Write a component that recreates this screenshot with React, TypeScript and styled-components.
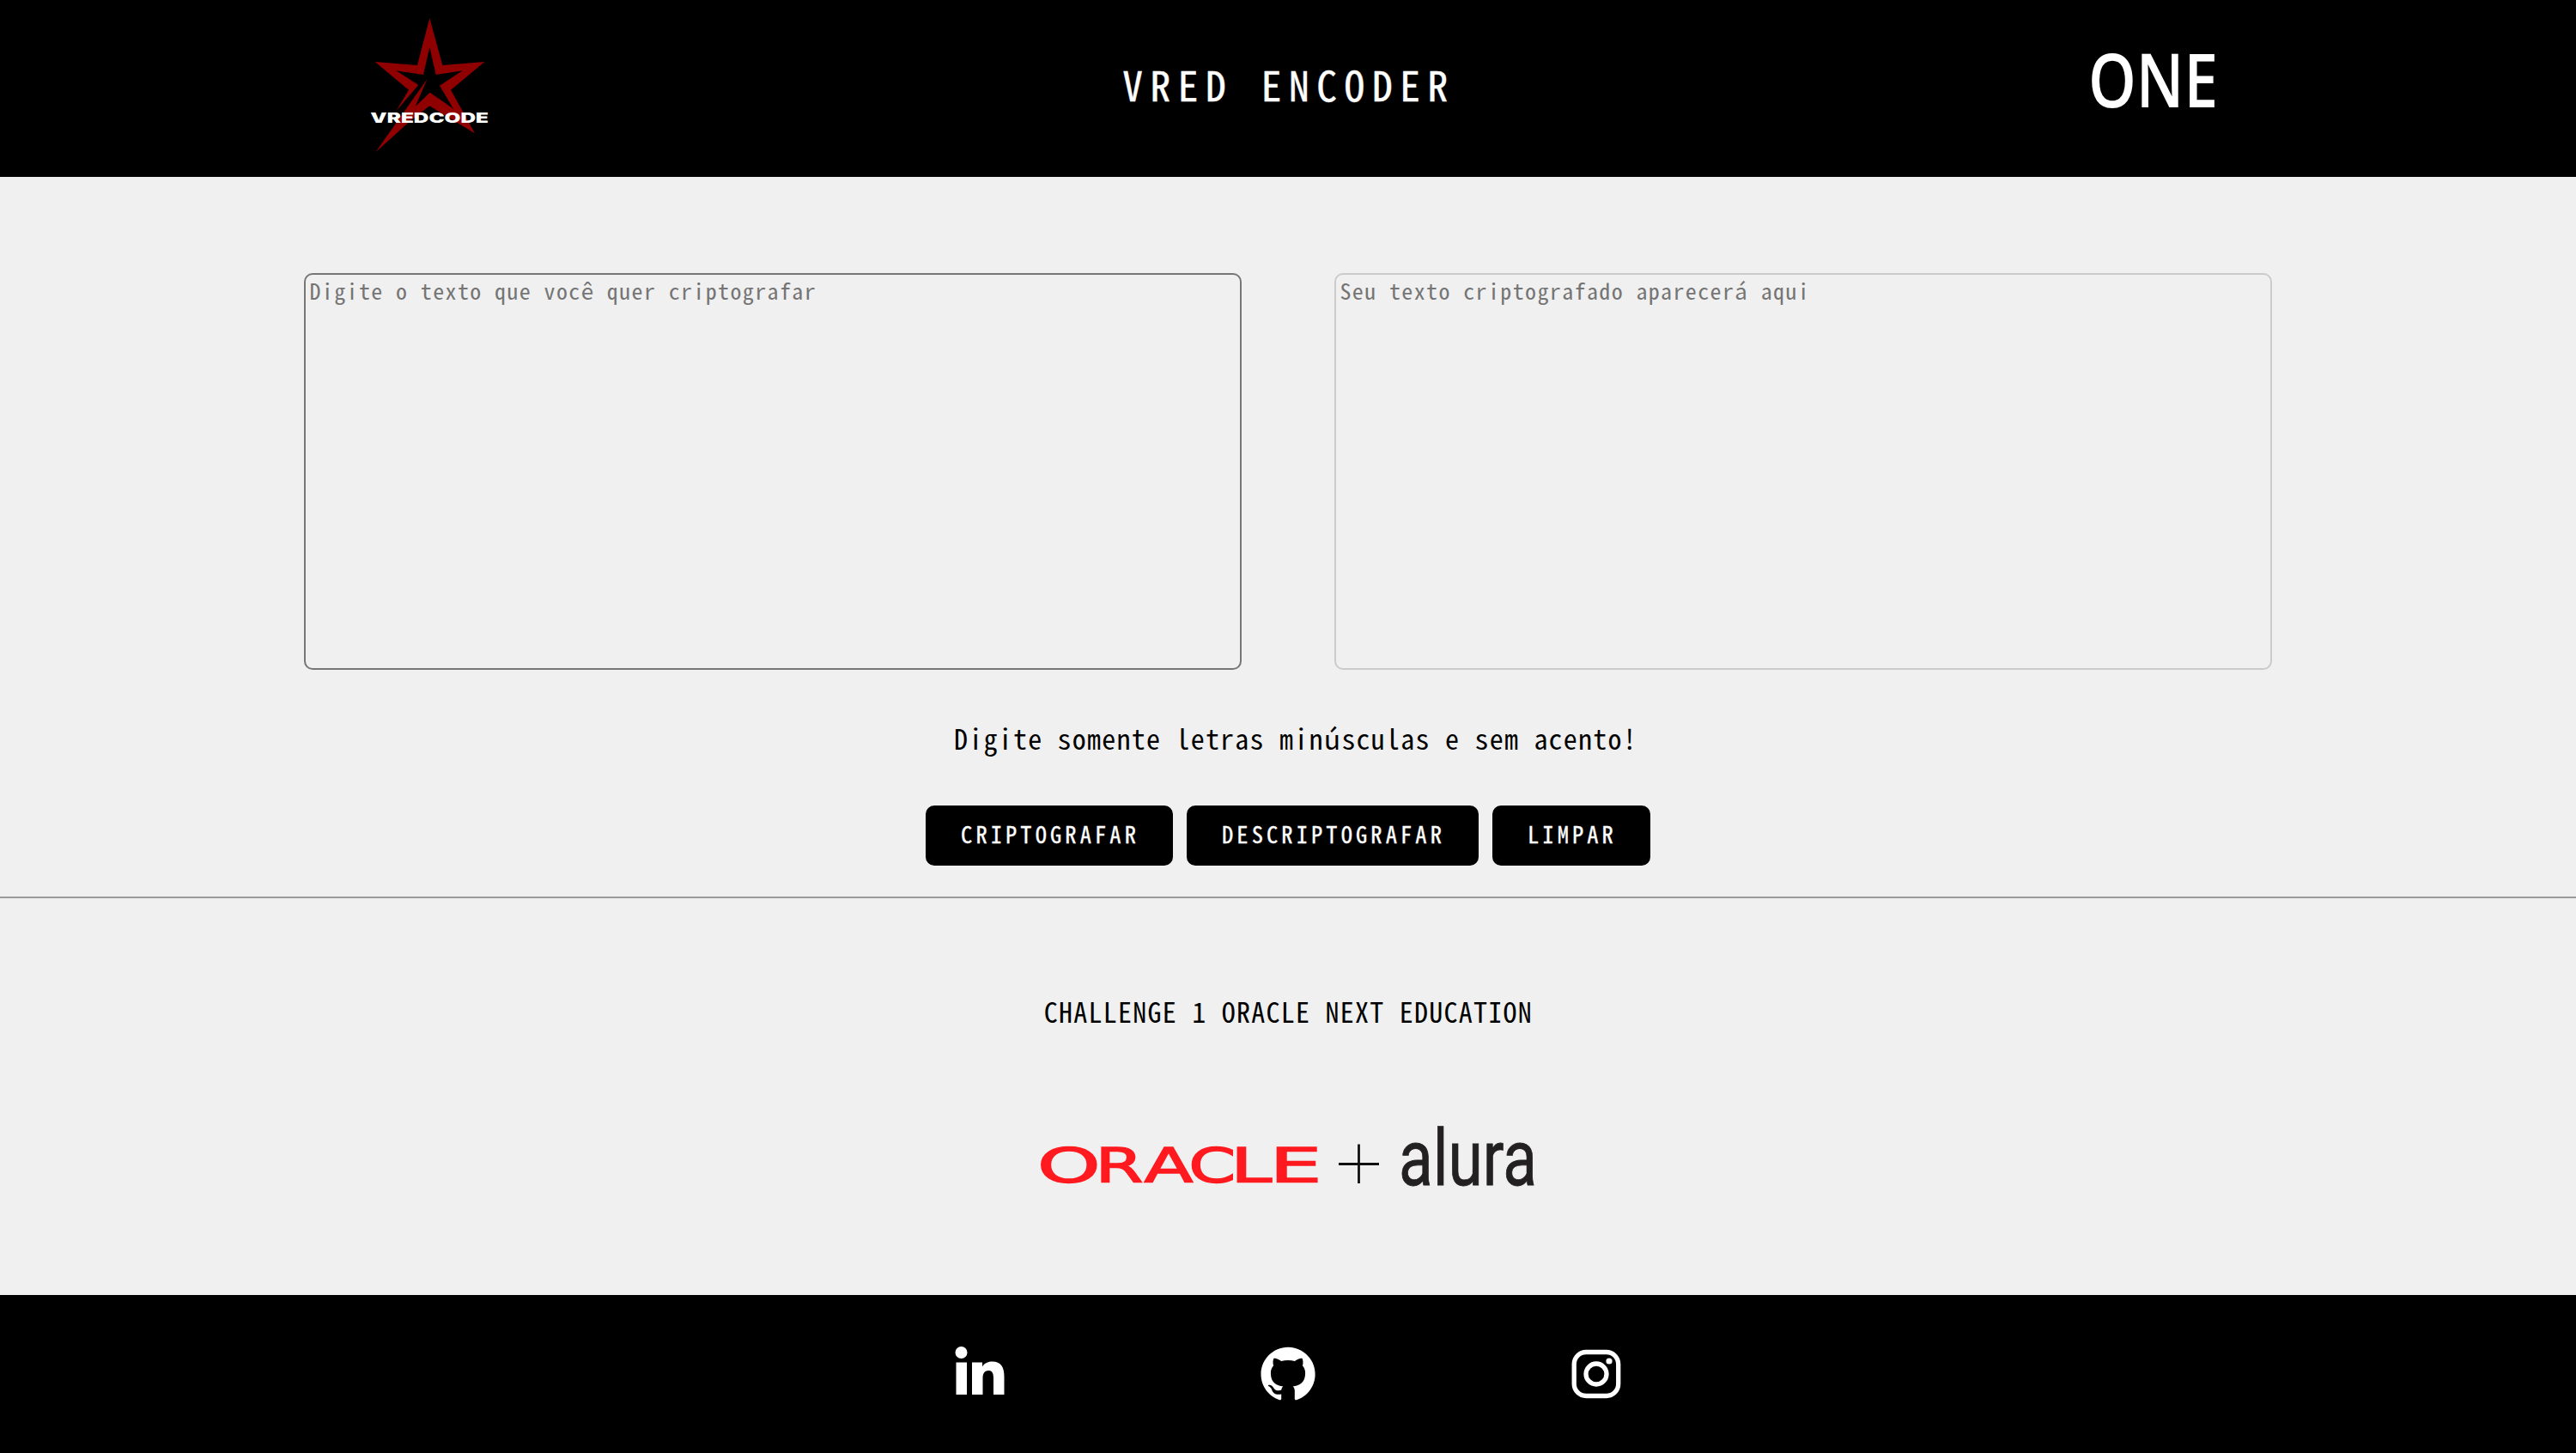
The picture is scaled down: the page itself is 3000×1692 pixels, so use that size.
import React from 'react';
import styled, { createGlobalStyle } from 'styled-components';

const mono = `"Noto Sans Mono CJK JP", "Liberation Mono", monospace`;

const GlobalStyle = createGlobalStyle`
  * { box-sizing: border-box; }
  body { margin: 0; background: #f0f0f0; font-family: ${mono}; color: #000; }
  h1, p { margin: 0; font-weight: 400; }
`;

const Page = styled.div`
  display: flex;
  flex-direction: column;
  height: 1692px;
  overflow: hidden;
`;

const Header = styled.header`
  display: grid;
  grid-template-columns: 1000px 1000px 1000px;
  height: 206px;
  background: #000;
  color: #fff;
  justify-items: center;
`;

const Title = styled.h1`
  font-size: 47.5px;
  line-height: 196px;
  height: 206px;
  padding-left: 2px;
  letter-spacing: 8.55px;
  white-space: pre;
  -webkit-text-stroke: 0.4px #fff;
`;

const Logo = styled.svg`
  display: block;
  overflow: visible;
`;

const Fields = styled.section`
  display: flex;
  justify-content: center;
  gap: 108px;
  padding-top: 112px;
`;

const Field = styled.textarea<{ $muted?: boolean }>`
  width: 1092px;
  height: 462px;
  padding: 2px 4.5px;
  border: 2px solid ${(p) => (p.$muted ? '#cbcbcb' : '#767676')};
  border-radius: 10px;
  background: transparent;
  resize: none;
  outline: none;
  font-family: ${mono};
  font-size: 26px;
  line-height: 32px;
  letter-spacing: 1.37px;
  &::placeholder { color: #757575; opacity: 1; }
`;

const Hint = styled.p`
  margin-top: 57px;
  height: 47px;
  line-height: 44px;
  padding-left: 18px;
  text-align: center;
  font-size: 32px;
  letter-spacing: 1.23px;
`;

const Actions = styled.div`
  display: flex;
  justify-content: center;
  gap: 16px;
  margin-top: 54px;
`;

const Button = styled.button`
  height: 70px;
  padding: 0 39px 4px 41px;
  border: 0;
  border-radius: 10px;
  background: #000;
  color: #fff;
  font-family: ${mono};
  font-size: 26.5px;
  font-weight: 400;
  line-height: 66px;
  letter-spacing: 4.08px;
  -webkit-text-stroke: 0.3px #fff;
`;

const Rule = styled.hr`
  width: 100%;
  height: 4px;
  margin: 36px 0 0;
  border: 0;
  border-top: 2px solid #9a9a9a;
  border-bottom: 2px solid #eeeeee;
`;

const Challenge = styled.p`
  margin-top: 107px;
  height: 47px;
  line-height: 44px;
  padding-left: 1px;
  text-align: center;
  font-size: 32px;
  letter-spacing: 1.25px;
`;

const Partners = styled.div`
  display: flex;
  justify-content: center;
  margin-top: 88px;
`;

const Footer = styled.footer`
  display: flex;
  justify-content: center;
  align-items: flex-start;
  gap: 295px;
  height: 184px;
  margin-top: auto;
  padding-top: 60px;
  background: #000;
`;

const SocialLink = styled.a`
  display: block;
  width: 64px;
  height: 64px;
`;

const StarLogo = () => (
  <Logo width="200" height="206" viewBox="0 0 600 618">
    <g fill="#900000">
      <path d="M301 64 L346 228 L493 216 L375 314 L459 466 L301 370 L236 420 L112 532 L184 430 L293 275 L251 372 L302 323 L384 380 L336 299 L416 247 L323 261 L301 164 L279 261 L184 247 L262 297 L184 388 L228 314 L110 216 L258 228 Z" />
    </g>
    <text x="94" y="428" textLength="413" lengthAdjust="spacingAndGlyphs" fill="#fff" fontFamily="Inter, sans-serif" fontWeight="900" fontSize="47">VREDCODE</text>
  </Logo>
);

const OneLogo = () => (
  <Logo width="200" height="206" viewBox="0 0 200 206">
    <text x="32" y="125" textLength="151" lengthAdjust="spacingAndGlyphs" fill="#fff" fontFamily='"Open Sans", sans-serif' fontWeight="600" fontSize="87">ONE</text>
  </Logo>
);

const oracle = [
  { c: 'O', x: 17.95, w: 73.6 },
  { c: 'R', x: 85.6, w: 56 },
  { c: 'A', x: 142.5, w: 57 },
  { c: 'C', x: 194.2, w: 55 },
  { c: 'L', x: 243.2, w: 48 },
  { c: 'E', x: 288.5, w: 61 },
];

const PartnersLogo = () => (
  <Logo width="620" height="110" viewBox="0 0 620 110">
    {oracle.map((l) => (
      <text key={l.c} x={l.x} y="85.500" textLength={l.w} lengthAdjust="spacingAndGlyphs" fill="#ff1a1f" stroke="#ff1a1f" strokeWidth="1.400" fontFamily='"DejaVu Sans", sans-serif' fontSize="54.500">{l.c}</text>
    ))}
    <path d="M369 65.5 H416 M392.500 42.500 V88" stroke="#111" strokeWidth="2.800" />
    <text x="439" y="89.500" textLength="161" lengthAdjust="spacingAndGlyphs" fill="#222021" stroke="#222021" strokeWidth="0.8" fontFamily="Roboto, sans-serif" fontWeight="400" fontSize="90">alura</text>
  </Logo>
);

const LinkedIn = () => (
  <Logo width="64" height="64" viewBox="0 0 64 64">
    <g fill="#fff">
      <circle cx="10.500" cy="7" r="7" />
      <path d="M4.500 18.500 H17 V56 H4.500 Z M23 18.500 H35 V23.500 C37 20 41 17.500 46.500 17.500 C57 17.500 60.500 24.500 60.500 35 V56 H48 V37 C48 32 47 28 42.500 28 C37 28 35.500 32 35.500 37 V56 H23 Z" />
    </g>
  </Logo>
);

const GitHub = () => (
  <Logo width="64" height="64" viewBox="0 0 64 64">
    <path transform="translate(0.5 0) scale(2.63)" fill="#fff" d="M12 .297c-6.630 0-12 5.373-12 12 0 5.303 3.438 9.800 8.205 11.385.6.113.82-.258.82-.577 0-.285-.01-1.040-.015-2.040-3.338.724-4.042-1.610-4.042-1.610C4.422 18.070 3.633 17.700 3.633 17.700c-1.087-.744.084-.729.084-.729 1.205.084 1.838 1.236 1.838 1.236 1.070 1.835 2.809 1.305 3.495.998.108-.776.417-1.305.76-1.605-2.665-.3-5.466-1.332-5.466-5.930 0-1.310.465-2.380 1.235-3.220-.135-.303-.54-1.523.105-3.176 0 0 1.005-.322 3.300 1.230.96-.267 1.980-.399 3-.405 1.020.006 2.040.138 3 .405 2.280-1.552 3.285-1.230 3.285-1.230.645 1.653.24 2.873.12 3.176.765.840 1.230 1.910 1.230 3.220 0 4.610-2.805 5.625-5.475 5.920.42.360.81 1.096.81 2.220 0 1.606-.015 2.896-.015 3.286 0 .315.21.690.825.570C20.565 22.092 24 17.592 24 12.297c0-6.627-5.373-12-12-12" />
  </Logo>
);

const Instagram = () => (
  <Logo width="64" height="64" viewBox="0 0 64 64">
    <g fill="none" stroke="#fff">
      <rect x="6.200" y="6.500" width="51.500" height="51" rx="14" strokeWidth="5.300" />
      <circle cx="32" cy="32" r="12" strokeWidth="5.300" />
    </g>
    <circle cx="47" cy="17" r="3.600" fill="#fff" />
  </Logo>
);

const actions = ['CRIPTOGRAFAR', 'DESCRIPTOGRAFAR', 'LIMPAR'];

export default function App() {
  return (
    <Page>
      <GlobalStyle />
      <Header>
        <StarLogo />
        <Title>VRED ENCODER</Title>
        <OneLogo />
      </Header>
      <Fields>
        <Field placeholder="Digite o texto que você quer criptografar" />
        <Field $muted disabled placeholder="Seu texto criptografado aparecerá aqui" />
      </Fields>
      <Hint>Digite somente letras minúsculas e sem acento!</Hint>
      <Actions>
        {actions.map((a) => (
          <Button key={a}>{a}</Button>
        ))}
      </Actions>
      <Rule />
      <Challenge>CHALLENGE 1 ORACLE NEXT EDUCATION</Challenge>
      <Partners>
        <PartnersLogo />
      </Partners>
      <Footer>
        <SocialLink><LinkedIn /></SocialLink>
        <SocialLink><GitHub /></SocialLink>
        <SocialLink><Instagram /></SocialLink>
      </Footer>
    </Page>
  );
}
